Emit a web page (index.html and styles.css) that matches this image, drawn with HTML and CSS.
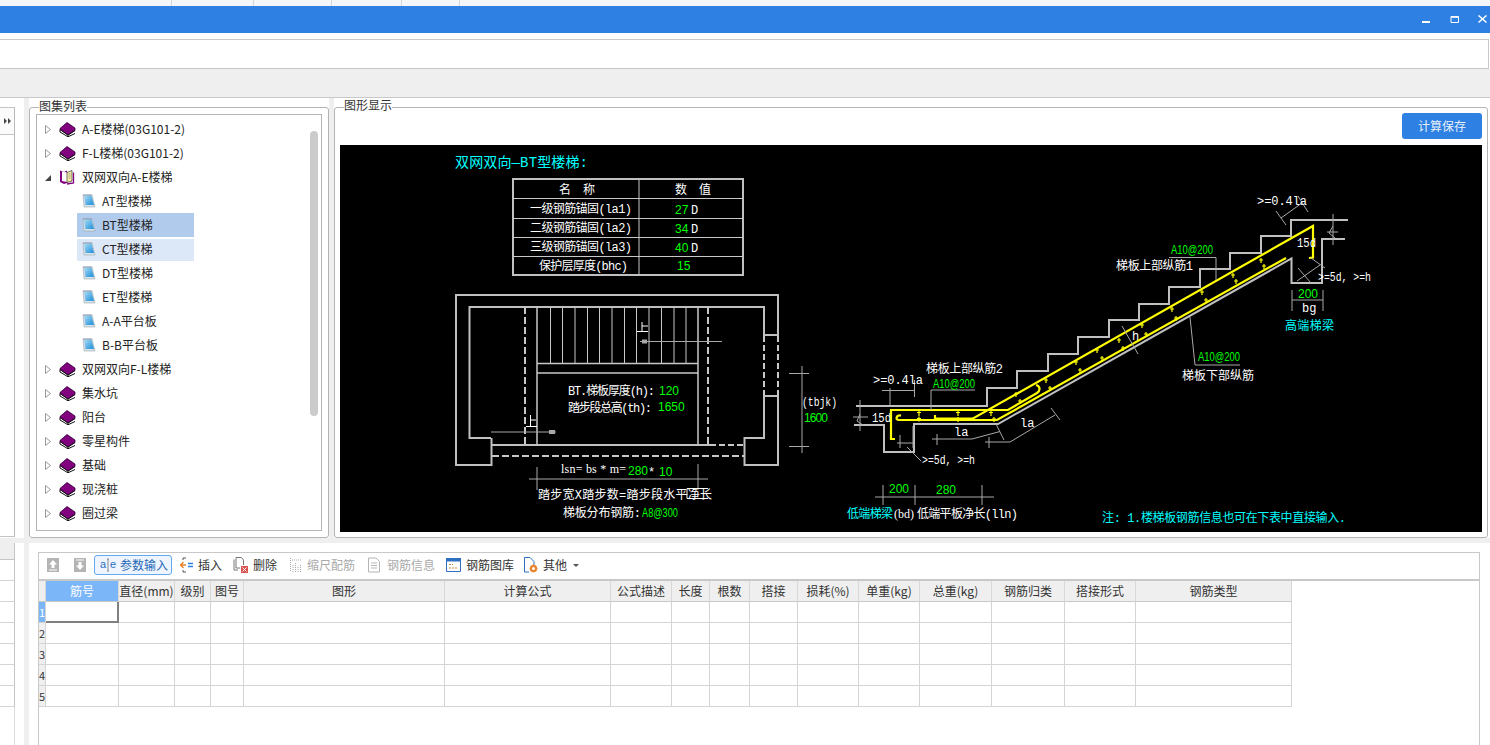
FILE: index.html
```html
<!DOCTYPE html>
<html lang="zh-CN">
<head>
<meta charset="utf-8">
<title>图集列表</title>
<link rel="stylesheet" href="styles.css">
</head>
<body>
<svg class="sprite" width="0" height="0">
  <defs>
    <linearGradient id="pg" x1="0" y1="0" x2="1" y2="1"><stop offset="0" stop-color="#a9dcf7"/><stop offset="1" stop-color="#1c8fd8"/></linearGradient>
    <symbol id="book" viewBox="0 0 17 16">
      <path class="b-page" d="M1 8.5 9 14.5 16 10 16 12.5 9 16 1 11Z"/>
      <path class="b-cover" d="M1 7.5 8 1.5 16 7 16 9.5 9 14 1 8.5Z"/>
      <path class="b-line" d="M1 8.5 9 14 16 9.5M1 8.5V11L9 15.8 16 12.5M9 14V15.8"/>
    </symbol>
    <symbol id="open" viewBox="0 0 17 16">
      <path class="o-back" d="M1 1.5 5 3 8 1.5V14L5 15 1 13Z"/>
      <path class="o-page" d="M3 2.5 8 3.5V13L3 12Z"/>
      <path class="o-right" d="M8 3.5 13 1.5V12L8 13.5Z"/>
      <path class="o-dots" d="M9.5 5h2M9.5 7h2M9.5 9h2"/>
      <path class="o-edge" d="M14.5 3.5V14L8 15"/>
    </symbol>
    <symbol id="note" viewBox="0 0 14 14">
      <path class="n-back" d="M1 1H10L13 13H2Z"/>
      <path class="n-blue" d="M2 1.5H9.5L12 11H3.5Z"/>
      <path class="n-top" d="M1.5 1H10"/>
    </symbol>
    <symbol id="tri" viewBox="0 0 6 9"><path class="t-open" d="M.5.5 5.5 4.5.5 8.5Z"/></symbol>
  </defs>
</svg>

<div class="tabstrip"><span class="tab t1"></span><span class="tab t2"></span><span class="tab t3"></span><span class="tab t4"></span><span class="tab t5"></span></div>

<header class="titlebar">
  <svg class="winbtn" width="9" height="9" viewBox="0 0 9 9"><path class="wb-min" d="M0 7H8"/></svg>
  <svg class="winbtn" width="9" height="9" viewBox="0 0 9 9"><path class="wb-line" d="M1 1.500H8.500V7.500H1ZM1 2.300H8.500"/></svg>
  <svg class="winbtn" width="9" height="9" viewBox="0 0 9 9"><path class="wb-close" d="M.5.5 8.500 7.500M8.500.5.5 7.500"/></svg>
</header>

<div class="addrwrap"><div class="addr"></div></div>
<div class="graybar"></div>

<main class="upper">
  <aside class="sidecol">
    <div class="sidebox">
      <div class="sidehead">
        <svg width="7" height="6" viewBox="0 0 7 6"><path class="ff" d="M0 0 3 3 0 6ZM4 0 7 3 4 6Z"/></svg>
      </div>
    </div>
  </aside>
  <div class="vgap"></div>

  <section class="treecol">
    <div class="group treegroup">
      <div class="legend">图集列表</div>
      <div class="treebox">
        <div class="scrollthumb"></div>
        <ul class="tree">
          <li class="node"><svg class="tri" width="6" height="9"><use href="#tri"/></svg><svg class="bk" width="17" height="16"><use href="#book"/></svg><span>A-E楼梯(03G101-2)</span></li>
          <li class="node"><svg class="tri" width="6" height="9"><use href="#tri"/></svg><svg class="bk" width="17" height="16"><use href="#book"/></svg><span>F-L楼梯(03G101-2)</span></li>
          <li class="node"><svg class="tri" width="6" height="9" viewBox="0 0 6 9"><path class="t-fill" d="M0 8 6 2V8Z"/></svg><svg class="bk" width="17" height="16"><use href="#open"/></svg><span>双网双向A-E楼梯</span></li>
          <li class="leaf"><svg width="14" height="14"><use href="#note"/></svg><span>AT型楼梯</span></li>
          <li class="leaf selected"><svg width="14" height="14"><use href="#note"/></svg><span>BT型楼梯</span></li>
          <li class="leaf hovered"><svg width="14" height="14"><use href="#note"/></svg><span>CT型楼梯</span></li>
          <li class="leaf"><svg width="14" height="14"><use href="#note"/></svg><span>DT型楼梯</span></li>
          <li class="leaf"><svg width="14" height="14"><use href="#note"/></svg><span>ET型楼梯</span></li>
          <li class="leaf"><svg width="14" height="14"><use href="#note"/></svg><span>A-A平台板</span></li>
          <li class="leaf"><svg width="14" height="14"><use href="#note"/></svg><span>B-B平台板</span></li>
          <li class="node"><svg class="tri" width="6" height="9"><use href="#tri"/></svg><svg class="bk" width="17" height="16"><use href="#book"/></svg><span>双网双向F-L楼梯</span></li>
          <li class="node"><svg class="tri" width="6" height="9"><use href="#tri"/></svg><svg class="bk" width="17" height="16"><use href="#book"/></svg><span>集水坑</span></li>
          <li class="node"><svg class="tri" width="6" height="9"><use href="#tri"/></svg><svg class="bk" width="17" height="16"><use href="#book"/></svg><span>阳台</span></li>
          <li class="node"><svg class="tri" width="6" height="9"><use href="#tri"/></svg><svg class="bk" width="17" height="16"><use href="#book"/></svg><span>零星构件</span></li>
          <li class="node"><svg class="tri" width="6" height="9"><use href="#tri"/></svg><svg class="bk" width="17" height="16"><use href="#book"/></svg><span>基础</span></li>
          <li class="node"><svg class="tri" width="6" height="9"><use href="#tri"/></svg><svg class="bk" width="17" height="16"><use href="#book"/></svg><span>现浇桩</span></li>
          <li class="node"><svg class="tri" width="6" height="9"><use href="#tri"/></svg><svg class="bk" width="17" height="16"><use href="#book"/></svg><span>圈过梁</span></li>
        </ul>
      </div>
    </div>
  </section>
  <div class="vgap5"></div>

  <section class="figcol">
    <div class="group figgroup">
      <div class="legend">图形显示</div>
      <div class="figtop"><button class="savebtn">计算保存</button></div>
      <svg class="cad" width="1142" height="387" viewBox="340 145 1142 387">
        <!-- rebar table -->
        <path class="g2" d="M513 179H743V275H513Z"/>
        <path class="g1" d="M639 179V275M513 198.500H743M513 218.500H743M513 237.500H743M513 256.500H743"/>
        <text class="c cy t14" x="455" y="167" textLength="133">双网双向—BT型楼梯:</text>
        <text class="c wh" x="559" y="194" textLength="36">名 称</text>
        <text class="c wh" x="675" y="194" textLength="36">数 值</text>
        <text class="c wh" x="530" y="213" textLength="102">一级钢筋锚固(la1)</text>
        <text class="c wh" x="530" y="232" textLength="102">二级钢筋锚固(la2)</text>
        <text class="c wh" x="530" y="251" textLength="102">三级钢筋锚固(la3)</text>
        <text class="c wh" x="539" y="270" textLength="89">保护层厚度(bhc)</text>
        <text class="s gr" x="675" y="214">27</text><text class="c wh" x="691" y="214">D</text>
        <text class="s gr" x="675" y="233">34</text><text class="c wh" x="691" y="233">D</text>
        <text class="s gr" x="675" y="252">40</text><text class="c wh" x="691" y="252">D</text>
        <text class="s gr" x="677" y="270">15</text>

        <!-- stair plan -->
        <path class="g2" d="M491 438H469.500V307H764V335H778V295H456V465H491.500V438"/>
        <path class="g2" d="M764 396H778V465H744.500V438H764V396Z"/>
        <path class="g2" d="M492 445H710"/>
        <path class="g1d" d="M764 336V396M778 336V396M710 445H744"/>
        <path class="g2d" d="M492 456H744M525 307V445M708 307V445"/>
        <path class="g15" d="M537 307V445M698 307V445M537 363.500H698M537 373H698"/>
        <path class="g1" d="M550.500 307V363M562.500 307V363M575 307V363M587.500 307V363M599.500 307V363M612 307V363M624.500 307V363M636.500 307V363M649 307V363M661.500 307V363M674 307V363M686 307V363"/>
        <path class="thin" d="M640 341.500H722M491 432H556"/>
        <path class="solidg" d="M642 339.500H647V343.500H642ZM549 430H555V434H549Z"/>
        <path class="wline" d="M637 331.500H648M642 322V331M642 326H648M526 426.500H537M530.500 415V426M530.500 420H536"/>
        <text class="c wh" x="568" y="395" textLength="87">BT.梯板厚度(h):</text><text class="s gr" x="659" y="395">120</text>
        <text class="c wh" x="568" y="412" textLength="84">踏步段总高(th):</text><text class="s gr" x="658" y="411">1650</text>
        <text class="r wh" x="561" y="473" textLength="65">lsn= bs * m=</text><text class="s gr" x="628" y="475">280</text>
        <text class="c wh" x="648" y="476">*</text><text class="s gr" x="659" y="476">10</text>
        <path class="thin" d="M529 479H708M537 467V490M698 464V490"/>
        <text class="c wh" x="538" y="499" textLength="174">踏步宽X踏步数=踏步段水平净长</text>
        <path class="thin-w" d="M687 488.500H708M687 498.500H708M687 488.500V498.500"/>
        <text class="c wh" x="563" y="517" textLength="78">梯板分布钢筋:</text><text class="s gr" x="642" y="517" textLength="36" lengthAdjust="spacingAndGlyphs">A8@300</text>
        <path class="thin" d="M802 366V453M789 373.500H809M789 446.500H809"/>
        <text class="c wh" x="802" y="406" textLength="35" lengthAdjust="spacingAndGlyphs">(tbjk)</text>
        <text class="s gr" x="804" y="422" textLength="24">1600</text>

        <!-- stair section -->
        <path class="g2" d="M856 406H987V388H1017V371H1048V354H1078V337H1109V320H1139V304H1169V287H1200V269H1230V253H1261V236H1291V220H1348"/>
        <path class="g2" d="M854 425H884V452H914V424H998L1291.500 258.500V283H1322V239H1345"/>
        <path class="y2" d="M935 415V418.500H973L1313 226V257.500L1309 258M895 439H891V410H1008L1037 393C1041 390 1040 386 1036 385M901 415.500C896 415 895 420 899 420H997L1286 258"/>
        <path class="yd" d="M919 411v5M917 412.500h4M919 416.500v5M917 418.500h4M958 411v5M956 412.500h4M958 417v5M956 419h4M991 411v5M989 412.500h4M994 417v5M992 419h4M1016 392v5M1014 394h4M1046 378v5M1044 380h4M1076 360v5M1074 362h4M1097 348v5M1095 350h4M1119 338v5M1117 340h4M1142 323v5M1140 325h4M1172 307v5M1170 309h4M1202 290v5M1200 292h4M1233 273v5M1231 275h4M1261 258v5M1259 260h4M1020 399v5M1018 401h4M1050 386v5M1048 388h4M1080 368v5M1078 370h4M1102 356v5M1100 358h4M1123 346v5M1121 348h4M1146 332v5M1144 334h4M1176 316v5M1174 318h4M1206 298v5M1204 300h4M1236 279v5M1234 281h4M1264 264v5M1262 266h4"/>
        <path class="thin" d="M882 390.500H914M890 388V405M914.500 380V397M860 400V431M853 417H868M860 414 857 421 863 425M931 410V390H975M932 439H972L1000 431.500M937 434V445M996 424 1004 440M985 442H1010L1055 415M989 437V448M1051 408 1060 420M897 443H913M900 435V448M913 426V448M907 447 921 461M875 497H994M883 485V505M915 485V505M982 485V505"/>
        <path class="thin" d="M1281 218 1302 203M1276 211 1286 225M1298 196 1308 212M1333 214V245M1327 232H1338M1333 226 1329 233 1335 238M1169 257.500H1216V280M1122 326 1138 354M1190 317 1195 365H1240M1292 290V311M1323 290V311M1292 300H1323M1297 281 1320 265M1298 268 1311 283M1311 258 1325 268"/>
        <text class="c wh" x="873" y="384" textLength="50">&gt;=0.4la</text>
        <text class="c wh" x="926" y="373" textLength="77">梯板上部纵筋2</text>
        <text class="s gr" x="933" y="388" textLength="42" lengthAdjust="spacingAndGlyphs">A10@200</text>
        <text class="c wh" x="872" y="422" textLength="19" lengthAdjust="spacingAndGlyphs">15d</text>
        <text class="c wh" x="954" y="436">la</text>
        <text class="c wh" x="1020" y="427">la</text>
        <text class="c wh" x="922" y="464" textLength="53" lengthAdjust="spacingAndGlyphs">&gt;=5d, &gt;=h</text>
        <text class="s gr" x="889" y="493">200</text>
        <text class="s gr" x="936" y="494">280</text>
        <text class="c cy" x="847" y="518" textLength="46">低端梯梁</text>
        <text class="r wh" x="894" y="518">(bd)</text>
        <text class="c wh" x="917" y="518" textLength="101">低端平板净长(lln)</text>
        <text class="c cy" x="1102" y="522" textLength="244">注: 1.楼梯板钢筋信息也可在下表中直接输入.</text>
        <text class="c wh" x="1257" y="205" textLength="50">&gt;=0.4la</text>
        <text class="c wh" x="1297" y="247" textLength="19" lengthAdjust="spacingAndGlyphs">15d</text>
        <text class="c wh" x="1318" y="281" textLength="53" lengthAdjust="spacingAndGlyphs">&gt;=5d, &gt;=h</text>
        <text class="s gr" x="1298" y="298">200</text>
        <text class="c wh" x="1302" y="312">bg</text>
        <text class="c cy" x="1285" y="330" textLength="49">高端梯梁</text>
        <text class="s gr" x="1171" y="254" textLength="42" lengthAdjust="spacingAndGlyphs">A10@200</text>
        <text class="c wh" x="1116" y="270" textLength="77">梯板上部纵筋1</text>
        <text class="c wh" x="1132" y="340">h</text>
        <text class="s gr" x="1198" y="361" textLength="42" lengthAdjust="spacingAndGlyphs">A10@200</text>
        <text class="c wh" x="1182" y="380" textLength="72">梯板下部纵筋</text>
      </svg>
    </div>
  </section>
</main>

<div class="hgap"></div>

<section class="lower">
  <aside class="sidelist">
    <div class="sl-head"></div>
    <div class="sl-row"></div><div class="sl-row"></div><div class="sl-row"></div><div class="sl-row"></div><div class="sl-row"></div><div class="sl-row"></div><div class="sl-row"></div>
    <div class="sl-tail"></div>
  </aside>
  <div class="vgap lowgap"></div>
  <div class="lowerwrap">
    <div class="gridpanel">
      <div class="toolbar">
        <div class="tool iconly"><svg width="12" height="14" viewBox="0 0 12 14"><path class="ti-box" d="M0 0H12V14H0Z"/><path class="ti-arrow" d="M6 2 10 6.500H7.500V10H4.500V6.500H2ZM2 11.500H10V12.500H2Z"/></svg></div>
        <div class="tool iconly"><svg width="12" height="14" viewBox="0 0 12 14"><path class="ti-box" d="M0 0H12V14H0Z"/><path class="ti-arrow" d="M6 12 10 7.500H7.500V4H4.500V7.500H2ZM2 1.500H10V2.500H2Z"/></svg></div>
        <div class="tool active"><svg width="18" height="16" viewBox="0 0 18 16"><text class="ae" x="1" y="11">a</text><text class="ae" x="11" y="11">e</text><path class="ibeam" d="M8 2H10M9 2V14M8 14H10"/></svg><span>参数输入</span></div>
        <div class="tool"><svg width="13" height="16" viewBox="0 0 13 16"><path class="ti-gray" d="M3 3V1H6M3 13V15H6"/><path class="ti-org" d="M6 8H1M3.500 5 .5 8 3.500 11"/><path class="ti-blue" d="M8 6.500H13M8 9.500H13"/></svg><span>插入</span></div>
        <div class="tool"><svg width="15" height="16" viewBox="0 0 15 16"><path class="ti-doc" d="M1 2.500V13H5M3 .5H8.500L10.500 3V8M3 .5V11H7"/><path class="ti-red" d="M8 9H15V16H8Z"/><path class="ti-x" d="M9.500 10.500 13.500 14.500M13.500 10.500 9.500 14.500"/></svg><span>删除</span></div>
        <div class="tool off scalet"><svg width="12" height="16" viewBox="0 0 12 16"><path class="ti-dash" d="M.5 1V15M3 8V15M5.500 6V15M8 10V15M10.500 8V15M2 3H11"/></svg><span>缩尺配筋</span></div>
        <div class="tool off infot"><svg width="12" height="16" viewBox="0 0 12 16"><path class="ti-dim" d="M.5 1H8L11.500 4.500V15H.5ZM3 6H9M3 8.500H9M3 11H9"/></svg><span>钢筋信息</span></div>
        <div class="tool"><svg width="15" height="14" viewBox="0 0 15 14"><path class="ti-win" d="M.5.5H14.500V13.500H.5Z"/><path class="ti-winh" d="M0 0H15V3.500H0Z"/><path class="ti-dim2" d="M3 6.500H7M3 10H12"/></svg><span>钢筋图库</span></div>
        <div class="tool othert"><svg width="15" height="16" viewBox="0 0 15 16"><path class="ti-win" d="M1.500 15V.5H7L11 4.500V8M1.500 15H6"/><circle class="gear" cx="10.500" cy="11.500" r="2.500"/><path class="gearo" d="M10.500 7.500V9M10.500 14V15.500M6.500 11.500H8M13 11.500H14.500M7.700 8.700 8.800 9.800M12.200 13.200 13.300 14.300M13.300 8.700 12.200 9.800M8.800 13.200 7.700 14.300"/></svg><span>其他</span><svg class="caret" width="6" height="3" viewBox="0 0 6 3"><path class="caretp" d="M0 0H6L3 3Z"/></svg></div>
      </div>
      <table class="grid">
        <colgroup><col class="w7"><col class="w73"><col class="w56"><col class="w36"><col class="w33"><col class="w201"><col class="w166"><col class="w61"><col class="w38"><col class="w40"><col class="w48"><col class="w61"><col class="w61"><col class="w72"><col class="w73"><col class="w71"><col class="w156"></colgroup>
        <thead>
          <tr><th></th><th class="cur">筋号</th><th>直径(mm)</th><th>级别</th><th>图号</th><th>图形</th><th>计算公式</th><th>公式描述</th><th>长度</th><th>根数</th><th>搭接</th><th>损耗(%)</th><th>单重(kg)</th><th>总重(kg)</th><th>钢筋归类</th><th>搭接形式</th><th>钢筋类型</th></tr>
        </thead>
        <tbody>
          <tr><th class="cur">1</th><td class="focus"></td><td></td><td></td><td></td><td></td><td></td><td></td><td></td><td></td><td></td><td></td><td></td><td></td><td></td><td></td><td></td></tr>
          <tr><th>2</th><td></td><td></td><td></td><td></td><td></td><td></td><td></td><td></td><td></td><td></td><td></td><td></td><td></td><td></td><td></td><td></td></tr>
          <tr><th>3</th><td></td><td></td><td></td><td></td><td></td><td></td><td></td><td></td><td></td><td></td><td></td><td></td><td></td><td></td><td></td><td></td></tr>
          <tr><th>4</th><td></td><td></td><td></td><td></td><td></td><td></td><td></td><td></td><td></td><td></td><td></td><td></td><td></td><td></td><td></td><td></td></tr>
          <tr><th>5</th><td></td><td></td><td></td><td></td><td></td><td></td><td></td><td></td><td></td><td></td><td></td><td></td><td></td><td></td><td></td><td></td></tr>
        </tbody>
      </table>
    </div>
  </div>
</section>
</body>
</html>
```

FILE: styles.css
```css
* { box-sizing: border-box; }
html, body { margin: 0; padding: 0; }
body {
  width: 1490px; height: 745px; overflow: hidden; background: #fff;
  font: 12px/1 "Noto Sans CJK SC", "Open Sans", sans-serif; color: #222;
  display: flex; flex-direction: column;
}
.sprite { position: absolute; }

/* top chrome */
.tabstrip { height: 6px; background: #f5f6f8; display: flex; flex: none; }
.tab { height: 6px; border-right: 1px solid #d4d6da; flex: none; }
.t1 { width: 172px; } .t2 { width: 82px; } .t3 { width: 78px; } .t4 { width: 70px; } .t5 { width: 58px; }

.titlebar {
  height: 27px; flex: none; background: #2e80e3;
  display: flex; justify-content: flex-end; align-items: flex-start; gap: 19px;
  padding: 9px 3px 0 0;
}
.winbtn { display: block; }
.wb-min { stroke: #fff; stroke-width: 2; fill: none; }
.wb-line { stroke: #fff; stroke-width: 1; fill: none; }
.wb-close { stroke: #fff; stroke-width: 1.500; fill: none; }

.addrwrap { height: 36px; flex: none; padding-top: 6px; background: #fff; }
.addr { height: 30px; width: 1489px; border: 1px solid #c8c8c8; border-left: 0; background: #fff; }
.graybar { height: 29px; flex: none; background: #efefef; border-bottom: 1px solid #c8c8c8; }

/* upper area */
.upper { height: 440px; flex: none; display: flex; background: #fff; }
.sidecol { width: 24px; flex: none; padding-top: 9px; }
.sidebox { width: 15px; height: 430px; border-top: 1px solid #c4c4c4; border-right: 1px solid #b8b8b8; border-bottom: 1px solid #c4c4c4; }
.sidehead { height: 27px; border-bottom: 1px solid #c4c4c4; background: #fbfbfb; display: flex; align-items: center; padding-left: 4px; }
.ff { fill: #444; }
.vgap { width: 5px; flex: none; background: #efefef; }
.vgap5 { width: 5px; flex: none; background: #efefef; }

.treecol { width: 300px; flex: none; padding-top: 9px; }
.figcol { flex: 1; padding-top: 9px; }
.group { border: 1px solid #b4b4b4; border-radius: 3px; height: 431px; background: #fff; }
.treegroup { padding: 6px; width: 300px; }
.figgroup { width: 1154px; padding: 5px 5px 0 5px; }
.legend { height: 12px; line-height: 12px; margin: -12px 0 0 4px; width: max-content; position: relative; top: -2px; background: #fff; color: #333; }
.treegroup .legend { margin: -12px 0 0 3px; }
.treebox { position: relative; width: 286px; height: 417px; border: 1px solid #b4b4b4; padding-top: 2px; overflow: hidden; }
.scrollthumb { position: absolute; left: 273px; top: 16px; width: 8px; height: 285px; background: #cbcbcb; border-radius: 4px; }
.tree { list-style: none; margin: 0; padding: 0; }
.node, .leaf { height: 24px; display: flex; align-items: center; line-height: 24px; white-space: nowrap; }
.node { padding-left: 8px; }
.node .tri { flex: none; }
.node .bk { flex: none; margin-left: 8px; margin-right: 6px; }
.leaf { margin-left: 40px; width: 117px; padding-left: 5px; }
.leaf svg { flex: none; margin-right: 6px; }
.selected { background: #b1cbec; }
.hovered { background: #dce7f8; height: 22px; margin: 2px 0 0 40px; padding-bottom: 2px; }
.t-open { fill: #fff; stroke: #999; stroke-width: 1; }
.t-fill { fill: #444; }
.b-cover { fill: #800080; stroke: #300030; stroke-width: .8; }
.b-page { fill: #fff; }
.b-line { fill: none; stroke: #111; stroke-width: 1; }
.o-back { fill: #800080; }
.o-page { fill: #fff; }
.o-right { fill: #f8f0a0; stroke: #111; stroke-width: .6; }
.o-dots { stroke: #999; fill: none; }
.o-edge { stroke: #800080; stroke-width: 1.300; fill: none; }
.n-back { fill: #dbe3e8; stroke: #98a8b0; stroke-width: .6; }
.n-blue { fill: url(#pg); }
.n-top { stroke: #607080; stroke-width: 1.200; stroke-dasharray: 1 1; fill: none; }

/* figure */
.figtop { height: 32px; display: flex; justify-content: flex-end; }
.savebtn {
  width: 80px; height: 26px; margin: 0; border: 0; border-radius: 3px; background: #2e80e3;
  color: #e8f0fa; font: 12px/26px "Noto Sans CJK SC", sans-serif; padding: 0;
}
.cad { display: block; background: #000; }
.g1 { stroke: #c8c8c8; stroke-width: 1; fill: none; }
.g15 { stroke: #c8c8c8; stroke-width: 1.500; fill: none; }
.g2 { stroke: #c0c0c0; stroke-width: 2; fill: none; }
.g1d { stroke: #c8c8c8; stroke-width: 2; stroke-dasharray: 6 3; fill: none; }
.g2d { stroke: #c8c8c8; stroke-width: 2; stroke-dasharray: 7 3; fill: none; }
.thin { stroke: #a8a8a8; stroke-width: 1; fill: none; }
.thin-w { stroke: #fff; stroke-width: 1; fill: none; }
.wline { stroke: #fff; stroke-width: 1; fill: none; }
.solidg { fill: #a8a8a8; }
.y2 { stroke: #ffff00; stroke-width: 2.200; fill: none; }
.yd { stroke: #ffff00; stroke-width: 1.200; fill: none; }
.c { font: 12px "Liberation Mono", "Noto Sans CJK SC", monospace; }
.r { font: 12px "Liberation Serif", "Noto Sans CJK SC", serif; }
.s { font: 12px "Liberation Sans", "Noto Sans CJK SC", sans-serif; }
.t14 { font-size: 14px; }
.wh { fill: #fff; }
.cy { fill: #00ffff; }
.gr { fill: #00ff00; }

/* lower */
.hgap { height: 5px; flex: none; background: #efefef; }
.lower { flex: 1; display: flex; background: #fff; min-height: 0; }
.sidelist { width: 24px; flex: none; }
.sl-head { width: 15px; height: 17px; background: #efefef; border-right: 1px solid #c4c4c4; border-bottom: 1px solid #c4c4c4; }
.sl-row { width: 15px; height: 21px; border-right: 1px solid #c4c4c4; border-bottom: 1px solid #d4d4d4; }
.sl-tail { width: 15px; height: 38px; border-right: 1px solid #dcdcdc; }
.lowgap { height: 202px; }
.lowerwrap { flex: 1; padding: 9px 0 0 9px; }
.gridpanel { width: 1442px; height: 193px; border: 1px solid #c8c8c8; border-bottom: 0; }

.toolbar { height: 28px; display: flex; align-items: center; gap: 5px; padding: 0 0 2px 5px; border-bottom: 2px solid #c8c8c8; }
.tool { height: 20px; display: flex; align-items: center; gap: 5px; padding: 0 3px; color: #333; flex: none; border-radius: 3px; line-height: 20px; white-space: nowrap; }
.iconly { width: 18px; padding: 0 3px; justify-content: center; }
.iconly + .iconly { margin-left: 4px; }
.active { border: 1px solid #62a8f2; background: #eef5fe; color: #2668b8; width: 78px; padding: 0 0 0 4px; gap: 3px; }
.off { color: #aaa; }
.scalet { margin-left: 2px; }
.infot { margin-left: 2px; gap: 7px; }
.othert { margin-left: -2px; }
.caret { margin-left: 1px; }
.caretp { fill: #555; }
.ti-box { fill: #b4b4b4; }
.ti-arrow { fill: #fff; }
.ae { font: 11px "Liberation Sans", sans-serif; fill: #2c6fc0; }
.ibeam { stroke: #888; fill: none; }
.ti-gray { stroke: #555; fill: none; }
.ti-org { stroke: #e8822a; fill: none; stroke-width: 1.300; }
.ti-blue { stroke: #2e80e3; fill: none; stroke-width: 1.300; }
.ti-doc { stroke: #777; fill: none; }
.ti-red { fill: #d9534f; }
.ti-x { stroke: #fff; fill: none; }
.ti-dash { stroke: #aaa; stroke-dasharray: 1 1; fill: none; }
.ti-dim { stroke: #b4b4b4; fill: none; }
.ti-win { stroke: #2e6fc0; fill: none; }
.ti-winh { fill: #2e6fc0; }
.ti-dim2 { stroke: #d08a40; stroke-dasharray: 2 1; fill: none; }
.gear { fill: #fff; stroke: #e8822a; stroke-width: 2; }
.gearo { stroke: #e8822a; stroke-width: 1.400; fill: none; }

.grid { border-collapse: separate; border-spacing: 0; table-layout: fixed; width: 1253px; }
.w7 { width: 7px; } .w73 { width: 73px; } .w56 { width: 56px; } .w36 { width: 36px; } .w33 { width: 33px; }
.w201 { width: 201px; } .w166 { width: 166px; } .w61 { width: 61px; } .w38 { width: 38px; } .w40 { width: 40px; }
.w48 { width: 48px; } .w72 { width: 72px; } .w71 { width: 71px; } .w156 { width: 156px; }
.grid th, .grid td { height: 21px; padding: 0; border-right: 1px solid #d4d4d4; border-bottom: 1px solid #d4d4d4; overflow: hidden; white-space: nowrap; }
.grid th { background: #efefef; font-weight: 400; text-align: center; color: #333; }
.grid thead th { height: 21px; border-bottom: 1px solid #c8c8c8; border-right-color: #d8d8d8; }
.grid tbody th { font-size: 11px; text-align: left; padding-left: 0; }
.grid .cur { background: #7ab6f8; color: #fff; }
.grid .focus { border-right: 2px solid #808080; border-bottom: 2px solid #808080; }
```
